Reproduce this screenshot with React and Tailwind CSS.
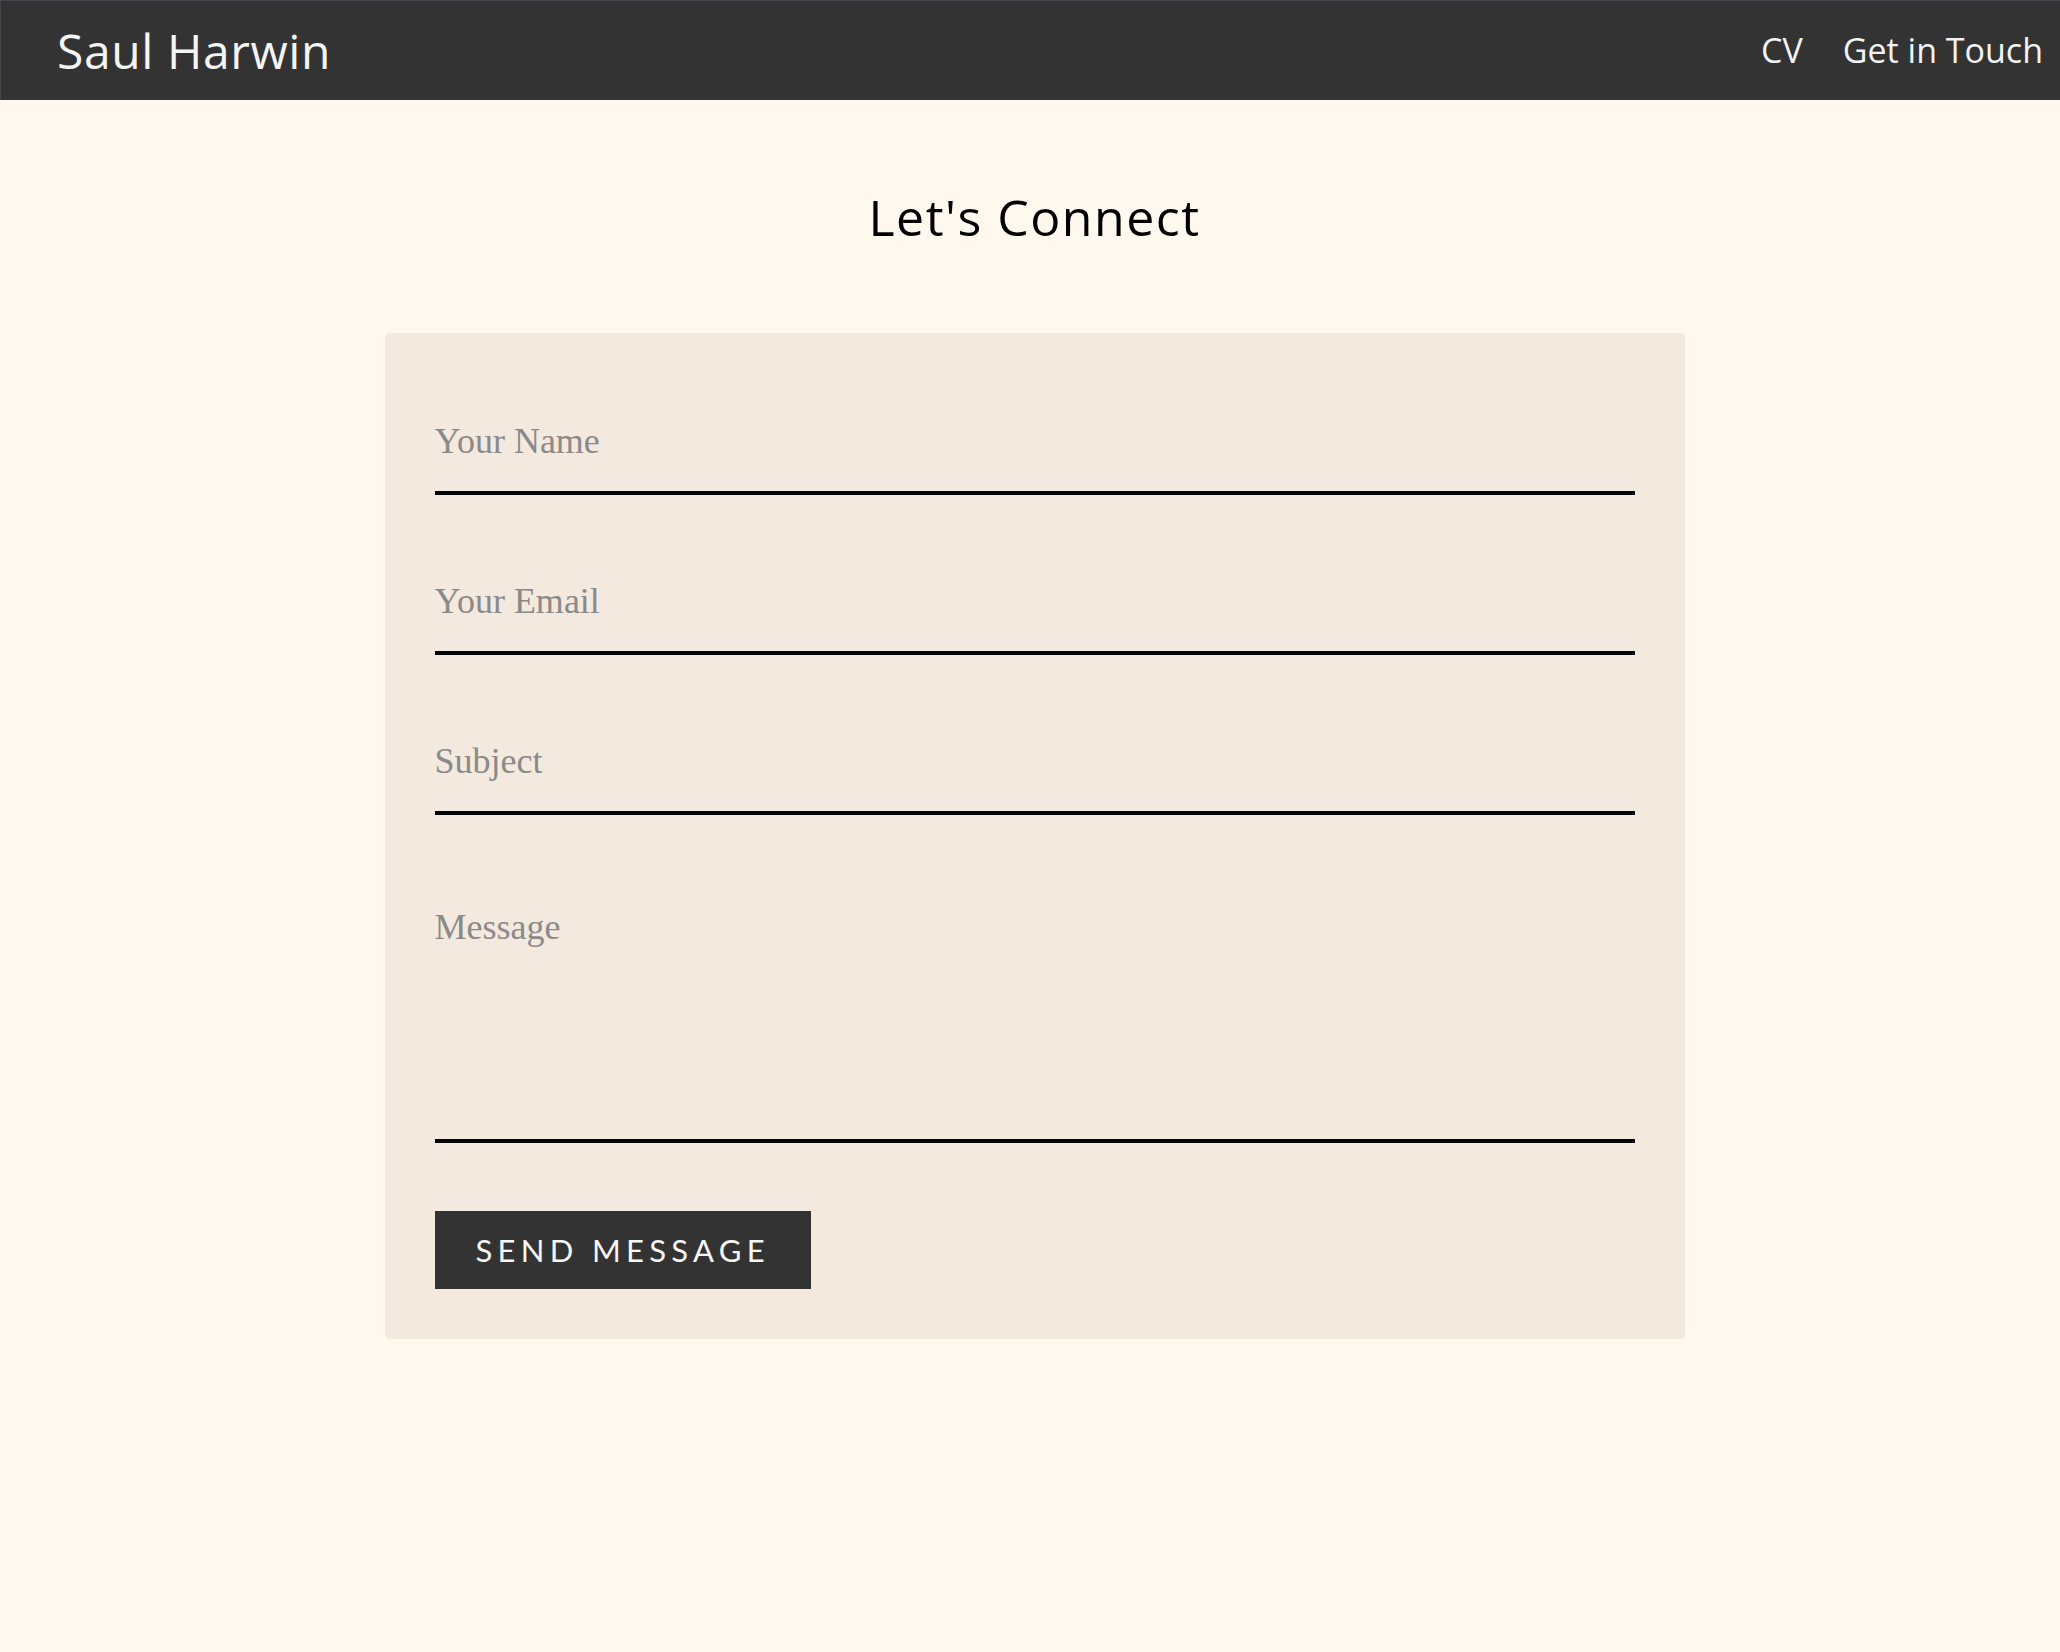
import React from 'react';

const fields = [
  { name: 'name', placeholder: 'Your Name', type: 'text' },
  { name: 'email', placeholder: 'Your Email', type: 'email' },
  { name: 'subject', placeholder: 'Subject', type: 'text' },
];

function Navbar() {
  return (
    <nav className="h-[100px] bg-[#333333] border-t border-l border-[#46464c] flex items-center justify-between pl-[56px] pr-[17px] font-['Open_Sans',sans-serif]">
      <a href="#" className="text-[48px] font-medium text-[#f4f4f4] tracking-[0.6px]">
        Saul Harwin
      </a>
      <div className="flex items-center gap-[40px] text-[34px] text-[#f2f2f2]">
        <a href="#">CV</a>
        <a href="#">Get in Touch</a>
      </div>
    </nav>
  );
}

export default function App() {
  return (
    <div className="min-h-screen bg-[#fff8ef]">
      <Navbar />

      <main className="pl-[9px] pb-[300px]">
        <h1 className="mt-[80px] text-center text-[50px] font-medium text-black tracking-[1.5px] font-['Open_Sans',sans-serif]">
          Let's Connect
        </h1>

        <form
          onSubmit={(e) => e.preventDefault()}
          className="w-[1300px] mx-auto mt-[78px] bg-[#f3e9de] rounded-[5px] p-[50px] flex flex-col"
        >
          <div className="flex flex-col gap-[48px]">
            {fields.map((f) => (
              <input
                key={f.name}
                type={f.type}
                name={f.name}
                placeholder={f.placeholder}
                className="block w-full h-[112px] pt-[8px] bg-transparent border-b-[4px] border-black outline-none text-[36px] text-[#333] placeholder:text-[#8a8a8a] font-['Liberation_Serif',serif]"
              />
            ))}
            <textarea
              name="message"
              placeholder="Message"
              className="block w-full h-[280px] pt-[37px] bg-transparent border-b-[4px] border-black outline-none resize-none text-[36px] text-[#333] placeholder:text-[#8a8a8a] font-['Liberation_Serif',serif]"
            />
          </div>

          <div className="mt-[68px]">
            <button
              type="submit"
              className="h-[78px] px-[41px] bg-[#333333] text-[#f7f7f7] text-[31px] tracking-[5.3px] uppercase font-['Lato',sans-serif]"
            >
              Send Message
            </button>
          </div>
        </form>
      </main>
    </div>
  );
}
